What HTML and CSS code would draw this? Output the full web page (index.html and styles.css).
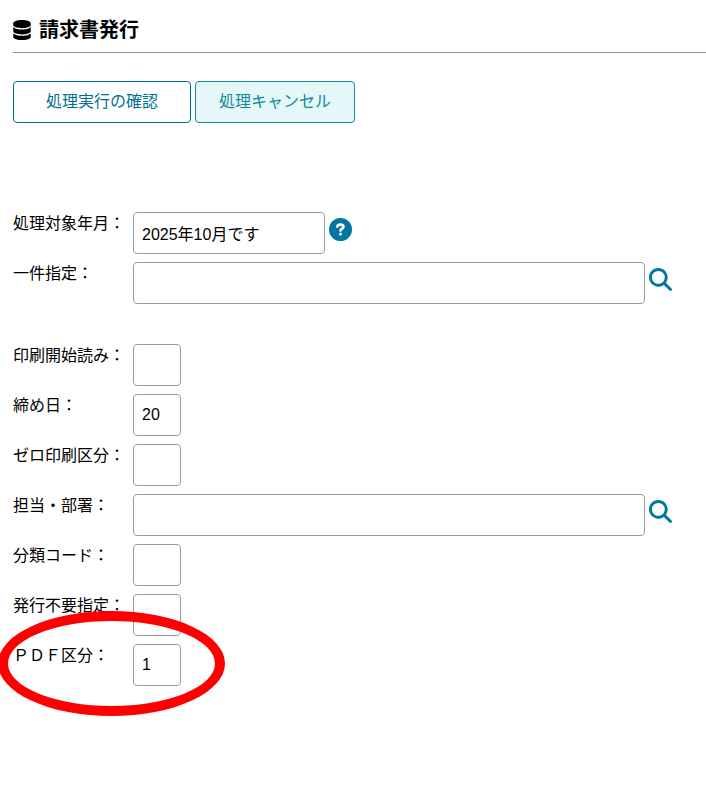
FILE: index.html
```html
<!DOCTYPE html>
<html lang="ja">
<head>
  <meta charset="UTF-8" />
  <meta name="viewport" content="width=device-width, initial-scale=1.0" />
  <title>請求書発行</title>
  <link rel="stylesheet" href="styles.css">
</head>
<body>
  <header class="page-header">
    <svg class="db-icon" viewBox="0 0 448 512" aria-hidden="true">
      <path d="M448 80v48c0 44.200-100.300 80-224 80S0 172.200 0 128V80C0 35.800 100.300 0 224 0S448 35.800 448 80zM393.200 214.700c20.800-7.400 39.900-16.900 54.800-28.600V288c0 44.200-100.300 80-224 80S0 332.200 0 288V186.100c14.900 11.800 34 21.200 54.800 28.600C99.700 230.700 159.500 240 224 240s124.300-9.300 169.200-25.300zM0 346.100c14.900 11.800 34 21.200 54.800 28.600C99.700 390.700 159.500 400 224 400s124.300-9.300 169.200-25.300c20.800-7.400 39.900-16.900 54.800-28.600V432c0 44.200-100.300 80-224 80S0 476.200 0 432V346.100z" />
    </svg>
    <h1>請求書発行</h1>
  </header>

  <form>
    <div class="buttons">
      <button type="button" class="btn">処理実行の確認</button>
      <button type="button" class="btn btn-cancel">処理キャンセル</button>
    </div>

    <div class="fields">
      <div class="row">
        <label for="month">処理対象年月：</label>
        <input type="text" id="month" class="medium" value="2025年10月です">
        <button type="button" class="icon-btn" aria-label="ヘルプ">
          <svg viewBox="0 0 512 512">
            <circle cx="256" cy="256" r="256" />
            <path class="mark" d="M184 190c8-32 32-44 68-44 42 0 70 17 70 49 0 46-66 44-66 84" />
            <circle class="dot" cx="256" cy="358" r="34" />
          </svg>
        </button>
      </div>
      <div class="row">
        <label for="single">一件指定：</label>
        <input type="text" id="single" class="long">
        <button type="button" class="icon-btn" aria-label="検索">
          <svg viewBox="0 0 512 512">
            <path d="M416 208c0 45.900-14.900 88.300-40 122.700L502.600 457.400c12.500 12.500 12.500 32.800 0 45.300s-32.800 12.500-45.300 0L330.700 376c-34.400 25.200-76.800 40-122.700 40C93.100 416 0 322.900 0 208S93.100 0 208 0S416 93.100 416 208zM208 352a144 144 0 1 0 0-288 144 144 0 1 0 0 288z" />
          </svg>
        </button>
      </div>
    </div>

    <div class="fields">
      <div class="row">
        <label for="start">印刷開始読み：</label>
        <input type="text" id="start" class="short">
      </div>
      <div class="row">
        <label for="closing">締め日：</label>
        <input type="text" id="closing" class="short" value="20">
      </div>
      <div class="row">
        <label for="zero">ゼロ印刷区分：</label>
        <input type="text" id="zero" class="short">
      </div>
      <div class="row">
        <label for="dept">担当・部署：</label>
        <input type="text" id="dept" class="long">
        <button type="button" class="icon-btn" aria-label="検索">
          <svg viewBox="0 0 512 512">
            <path d="M416 208c0 45.900-14.900 88.300-40 122.700L502.600 457.400c12.500 12.500 12.500 32.800 0 45.300s-32.800 12.500-45.300 0L330.700 376c-34.400 25.200-76.800 40-122.700 40C93.100 416 0 322.900 0 208S93.100 0 208 0S416 93.100 416 208zM208 352a144 144 0 1 0 0-288 144 144 0 1 0 0 288z" />
          </svg>
        </button>
      </div>
      <div class="row">
        <label for="category">分類コード：</label>
        <input type="text" id="category" class="short">
      </div>
      <div class="row">
        <label for="exclude">発行不要指定：</label>
        <input type="text" id="exclude" class="short">
      </div>
      <div class="row marked">
        <label for="pdf">ＰＤＦ区分：</label>
        <input type="text" id="pdf" class="short" value="1">
        <span class="red-circle"></span>
      </div>
    </div>
  </form>
</body>
</html>
```

FILE: styles.css
```css
* {
  box-sizing: border-box;
}
body {
  margin: 0;
  padding: 12px 0 0 13px;
  background: #fff;
  color: #000;
  font-family: "Liberation Sans", "Noto Sans CJK JP", sans-serif;
  font-size: 16px;
  line-height: 24px;
  overflow-x: hidden;
}
.page-header {
  display: flex;
  align-items: center;
  gap: 8px;
  height: 41px;
  padding-bottom: 5px;
  border-bottom: 1px solid #8f979e;
}
.page-header h1 {
  margin: 0;
  font-size: 20px;
  line-height: 24px;
}
.db-icon {
  width: 18px;
  height: 20px;
}
.buttons {
  display: flex;
  gap: 4px;
  margin: 28px 0 89px;
}
.btn {
  height: 42px;
  padding: 0 32px;
  border: 1px solid #00708f;
  border-radius: 4px;
  background: #fff;
  color: #00708f;
  font: inherit;
  cursor: pointer;
}
.btn-cancel {
  padding: 0 23px;
  border-color: #108a96;
  background: #e5f7f9;
  color: #108a96;
}
.fields {
  display: flex;
  flex-direction: column;
  gap: 8px;
  margin-bottom: 40px;
}
.row {
  display: flex;
  align-items: flex-start;
}
.row label {
  flex: 0 0 120px;
  white-space: nowrap;
}
.row input {
  height: 42px;
  padding: 0 8px 1px;
  border: 1px solid #999ea6;
  border-radius: 4px;
  background: #fff;
  color: #000;
  font: inherit;
}
.short {
  width: 48px;
}
.medium {
  width: 192px;
}
.long {
  width: 512px;
}
.icon-btn {
  flex: none;
  width: 23px;
  height: 23px;
  margin: 6px 0 0 4px;
  padding: 0;
  border: 0;
  background: none;
  cursor: pointer;
}
.icon-btn svg {
  display: block;
  width: 100%;
  height: 100%;
  fill: #0076a0;
}
.icon-btn .mark {
  fill: none;
  stroke: #fff;
  stroke-width: 60;
  stroke-linecap: round;
}
.icon-btn .dot {
  fill: #fff;
}
.marked {
  position: relative;
}
/* hand-drawn style highlight around the PDF field */
.red-circle {
  position: absolute;
  top: -33px;
  left: -15px;
  width: 227px;
  height: 105px;
  border: 10px solid #f00;
  border-radius: 50%;
  pointer-events: none;
}
```
